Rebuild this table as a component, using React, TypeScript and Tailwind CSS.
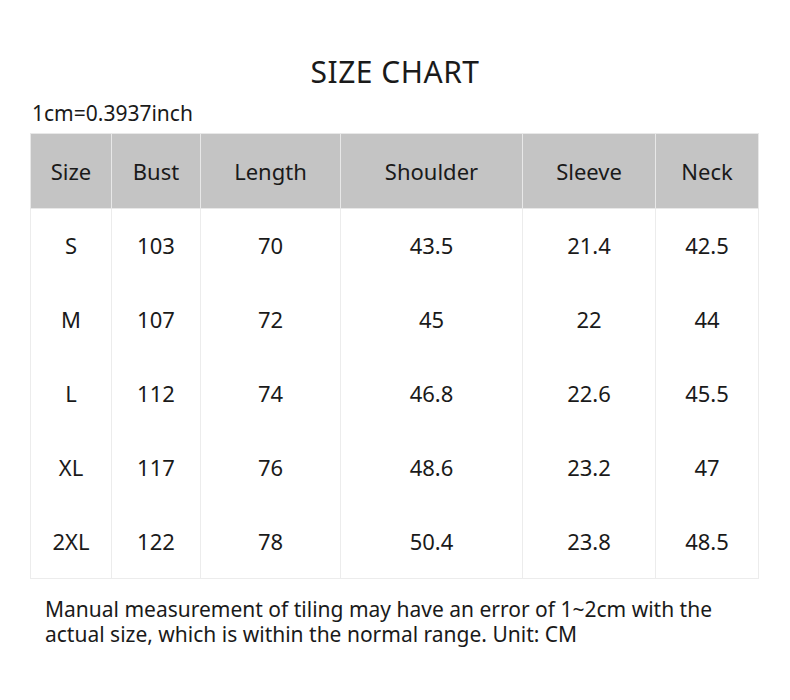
import React from "react";

const headers = ["Size", "Bust", "Length", "Shoulder", "Sleeve", "Neck"];
const widths = ["w-[81px]", "w-[89px]", "w-[140px]", "w-[182px]", "w-[133px]", "w-[103px]"];

const rows = [
  ["S", "103", "70", "43.5", "21.4", "42.5"],
  ["M", "107", "72", "45", "22", "44"],
  ["L", "112", "74", "46.8", "22.6", "45.5"],
  ["XL", "117", "76", "48.6", "23.2", "47"],
  ["2XL", "122", "78", "50.4", "23.8", "48.5"],
];

export default function App() {
  return (
    <div
      className="w-[790px] h-[700px] bg-white text-[#1a1a1a]"
      style={{ fontFamily: '"Noto Sans", "Open Sans", sans-serif' }}
    >
      <h1 className="pt-[52px] text-center text-[30px] leading-[40px] tracking-[0.5px]">
        SIZE CHART
      </h1>
      <p className="mt-[7px] pl-[32px] text-[21px] leading-[28px]">1cm=0.3937inch</p>

      <table className="ml-[30px] mt-[6px] table-fixed border-collapse w-[729px] text-[22px]">
        <colgroup>
          {widths.map((w, i) => (
            <col key={i} className={w} />
          ))}
        </colgroup>
        <thead>
          <tr className="h-[75px] bg-[#c4c4c4]">
            {headers.map((h) => (
              <th key={h} className="border border-[#e8e8e8] font-normal text-center">
                {h}
              </th>
            ))}
          </tr>
        </thead>
        <tbody>
          {rows.map((r, ri) => (
            <tr key={r[0]} className="h-[74px]">
              {r.map((c, i) => (
                <td
                  key={i}
                  className={
                    ri === rows.length - 1
                      ? "border-x border-b border-[#ececec] text-center"
                      : "border-x border-[#ececec] text-center"
                  }
                >
                  {c}
                </td>
              ))}
            </tr>
          ))}
        </tbody>
      </table>

      <p className="mt-[18px] pl-[45px] pr-[50px] text-[21px] leading-[25px]">
        Manual measurement of tiling may have an error of 1~2cm with the actual size, which is within the normal range. Unit: CM
      </p>
    </div>
  );
}
